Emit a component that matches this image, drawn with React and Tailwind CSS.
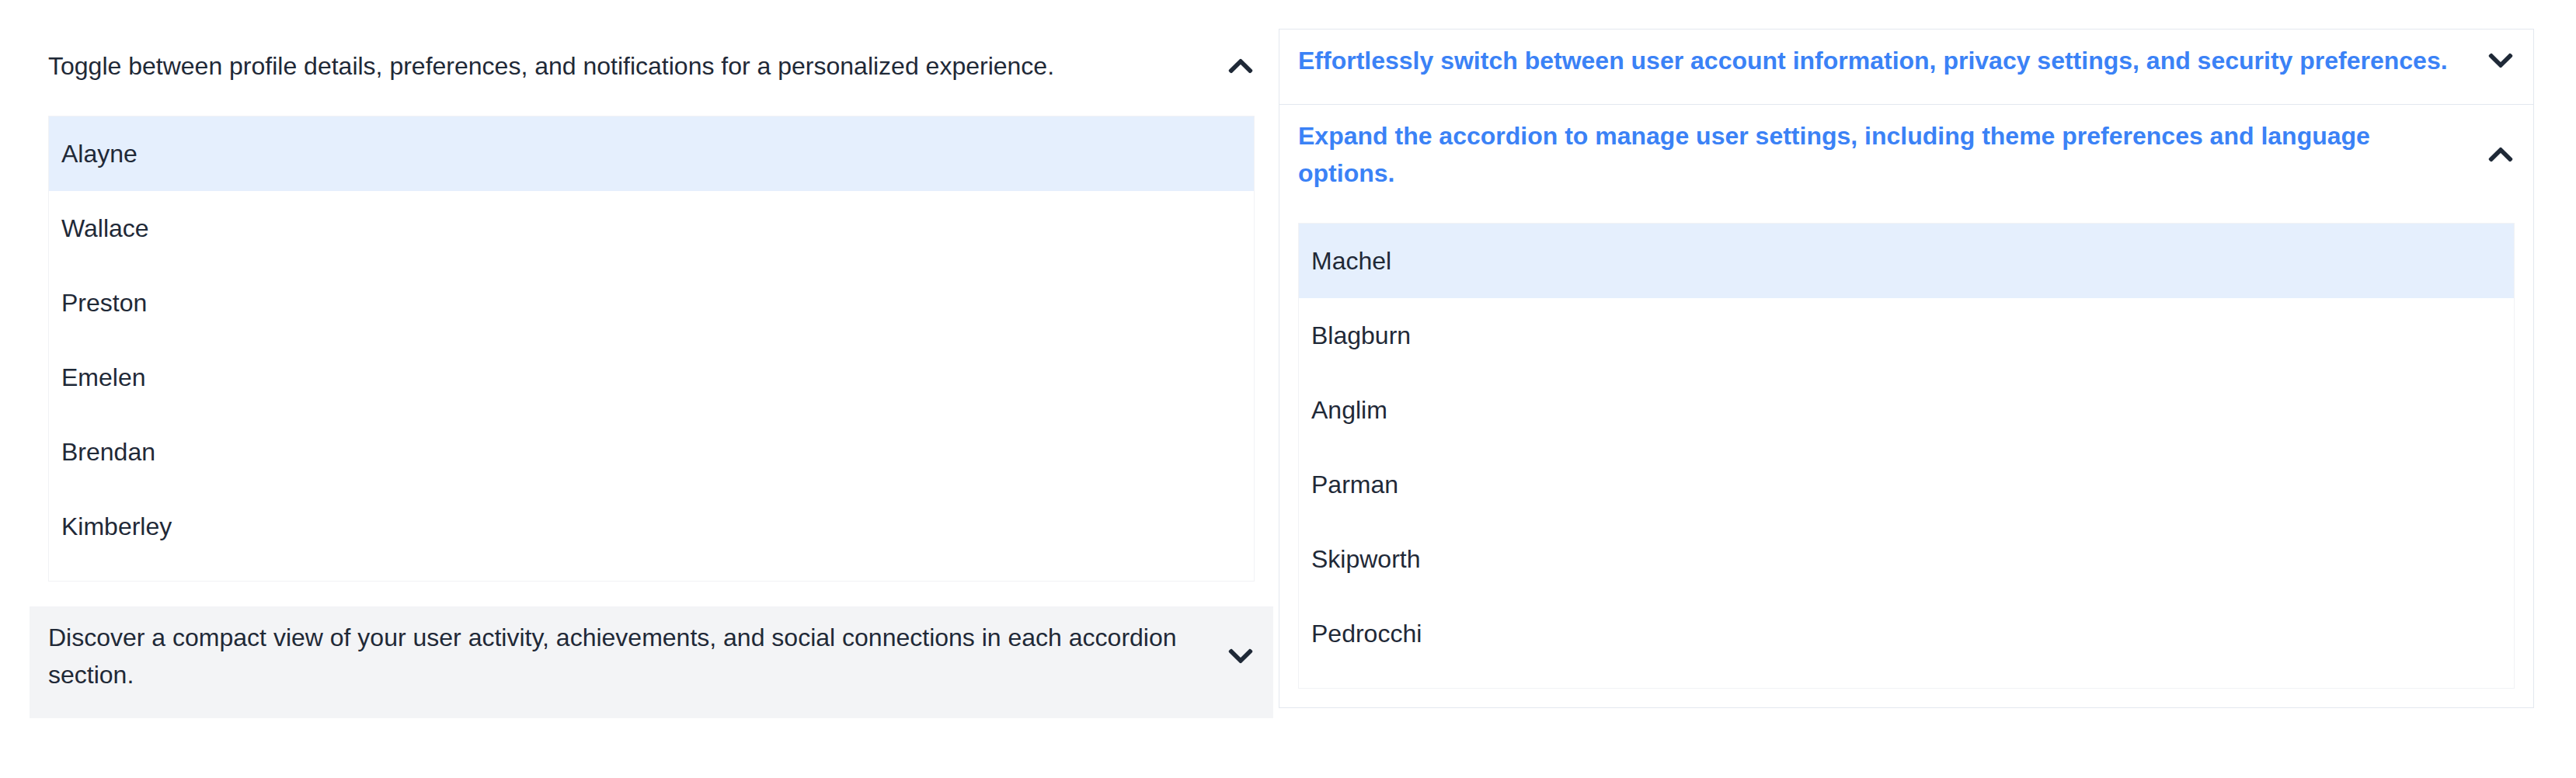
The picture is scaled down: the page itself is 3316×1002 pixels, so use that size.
import { useState } from 'react';
import { FaChevronUp, FaChevronDown } from 'react-icons/fa';

const leftNames = ['Alayne', 'Wallace', 'Preston', 'Emelen', 'Brendan', 'Kimberley'];
const rightNames = ['Machel', 'Blagburn', 'Anglim', 'Parman', 'Skipworth', 'Pedrocchi'];

function NameList({ names, selected }) {
  return (
    <ul className="border border-[#f1f2f5] pb-[22px]">
      {names.map((name) => (
        <li
          key={name}
          className={`px-4 py-6 ${name === selected ? 'bg-[#e5effd]' : 'bg-white'}`}
        >
          {name}
        </li>
      ))}
    </ul>
  );
}

export default function App() {
  const [leftOpen, setLeftOpen] = useState(0);
  const [rightOpen, setRightOpen] = useState(1);

  return (
    <div className="min-h-screen bg-white flex items-start gap-[7px] pt-[37px] pl-[38px] font-['Liberation_Sans',Arial,sans-serif] text-[32px] leading-[48px] text-[#1f2937]">
      {/* Left accordion */}
      <div className="w-[1601px] mt-[8px] flex flex-col">
        <div>
          <button
            onClick={() => setLeftOpen(leftOpen === 0 ? -1 : 0)}
            className="w-full flex items-center justify-between gap-8 px-6 pt-4 pb-8 text-left"
          >
            <span>Toggle between profile details, preferences, and notifications for a personalized experience.</span>
            {leftOpen === 0 ? <FaChevronUp size={36} className="shrink-0" /> : <FaChevronDown size={36} className="shrink-0" />}
          </button>
          {leftOpen === 0 && (
            <div className="px-6 pt-2 pb-8">
              <NameList names={leftNames} selected="Alayne" />
            </div>
          )}
        </div>
        <div className="bg-[#f3f4f6]">
          <button
            onClick={() => setLeftOpen(leftOpen === 1 ? -1 : 1)}
            className="w-full flex items-center justify-between gap-8 px-6 pt-4 pb-8 text-left"
          >
            <span>Discover a compact view of your user activity, achievements, and social connections in each accordion section.</span>
            {leftOpen === 1 ? <FaChevronUp size={36} className="shrink-0" /> : <FaChevronDown size={36} className="shrink-0" />}
          </button>
        </div>
      </div>

      {/* Right accordion */}
      <div className="w-[1616px] border border-[#e3e8ef]">
        <div className="border-b border-[#e3e8ef]">
          <button
            onClick={() => setRightOpen(rightOpen === 0 ? -1 : 0)}
            className="w-full flex items-center justify-between gap-8 px-6 pt-4 pb-8 text-left"
          >
            <span className="font-bold text-[#3b82f6]">Effortlessly switch between user account information, privacy settings, and security preferences.</span>
            {rightOpen === 0 ? <FaChevronUp size={36} className="shrink-0" /> : <FaChevronDown size={36} className="shrink-0" />}
          </button>
        </div>
        <div>
          <button
            onClick={() => setRightOpen(rightOpen === 1 ? -1 : 1)}
            className="w-full flex items-center justify-between gap-8 px-6 pt-4 pb-8 text-left"
          >
            <span className="font-bold text-[#3b82f6]">Expand the accordion to manage user settings, including theme preferences and language options.</span>
            {rightOpen === 1 ? <FaChevronUp size={36} className="shrink-0" /> : <FaChevronDown size={36} className="shrink-0" />}
          </button>
          {rightOpen === 1 && (
            <div className="px-6 pt-2 pb-6">
              <NameList names={rightNames} selected="Machel" />
            </div>
          )}
        </div>
      </div>
    </div>
  );
}
